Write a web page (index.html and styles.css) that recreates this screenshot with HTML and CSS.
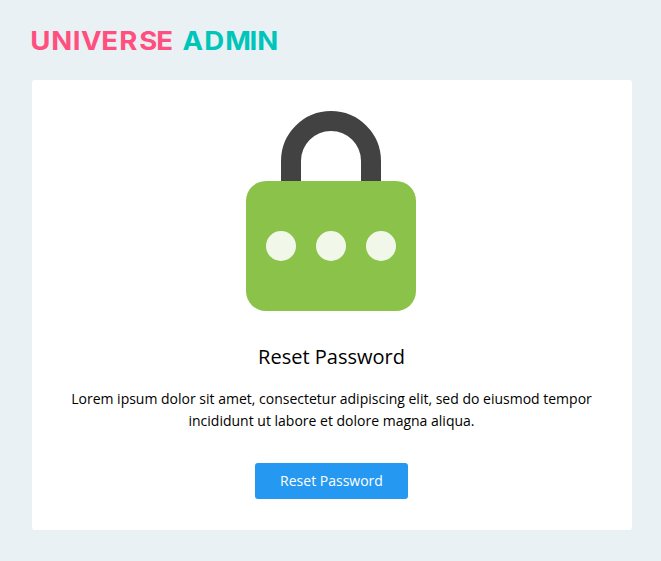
FILE: index.html
```html
<!DOCTYPE html>
<html lang="en">
<head>
<meta charset="utf-8">
<title>Universe Admin – Reset Password</title>
<link rel="stylesheet" href="styles.css">
</head>
<body>
<header class="brand">
<svg class="logo" width="260" height="32" viewBox="0 0 260 32" role="img" aria-label="Universe Admin">
<g transform="scale(1.06 1)">
<text class="logo-pink" x="-1.6 18.1 38.4 46.2 65.3 82.4 101.1 117.3" y="24">UNIVERSE</text>
<text class="logo-teal" x="142 162.4 182.3 205.1 212.6" y="24">ADMIN</text>
</g>
</svg>
</header>
<main class="card">
<svg class="lock" width="170" height="200" viewBox="0 0 170 200" aria-hidden="true">
<path d="M45 80V50a40 40 0 0 1 80 0v30" fill="none" stroke="#424242" stroke-width="20"/>
<rect y="70" width="170" height="130" rx="20" fill="#8bc34a"/>
<g fill="#f1f8e9"><circle cx="35" cy="135" r="15"/><circle cx="85" cy="135" r="15"/><circle cx="135" cy="135" r="15"/></g>
</svg>
<h1 class="title">Reset Password</h1>
<p class="text">Lorem ipsum dolor sit amet, consectetur adipiscing elit, sed do eiusmod tempor incididunt ut labore et dolore magna aliqua.</p>
<a class="button" href="#">Reset Password</a>
</main>
</body>
</html>
```
FILE: styles.css
```css
* { box-sizing: border-box; }
body {
  margin: 0;
  padding: 26px 29px 31px 32px;
  background: #e9f1f5;
  color: #000;
  font-family: "Open Sans", sans-serif;
  font-size: 14px;
  line-height: 22px;
}
.brand { height: 54px; }
.logo { display: block; overflow: visible; }
.logo text { font: 700 26px Inter, sans-serif; }
.logo-pink { fill: #ff4f7f; }
.logo-teal { fill: #00c5b9; }
.card {
  display: flex;
  flex-direction: column;
  align-items: center;
  height: 450px;
  padding: 31px 31px 31px 30px;
  border-radius: 3px;
  background: #fff;
  text-align: center;
}
.lock { flex: none; margin-right: 1px; }
.title {
  margin: 32px 0 17px;
  font-size: 20px;
  font-weight: 400;
  line-height: 28px;
}
.text { margin: 0 0 31px; }
.button {
  width: 153px;
  height: 36px;
  border-radius: 3px;
  background: #2599f2;
  color: #fff;
  line-height: 36px;
  text-decoration: none;
}
```
